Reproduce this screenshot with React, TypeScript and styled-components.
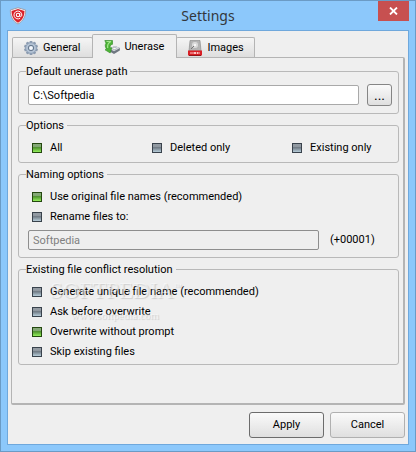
import React, { useState } from "react";
import styled, { createGlobalStyle, css } from "styled-components";

const GlobalStyle = createGlobalStyle`
  *, *::before, *::after { box-sizing: border-box; }
  body { margin: 0; background: #8cc8fb; }
  body, button, input {
    font-family: Roboto, "Noto Sans", sans-serif;
    font-size: 11px;
    line-height: 14px;
    color: #000;
  }
`;

const Window = styled.main`
  min-height: 100vh;
  display: flex;
  flex-direction: column;
  padding: 0 6px 6px;
  background: #8cc8fb;
  border: 1px solid #6b9bc5;
`;

const TitleBar = styled.header`
  display: grid;
  grid-template-columns: 32px 1fr 32px;
  align-items: start;
  height: 29px;
`;

const AppIcon = styled.svg`
  margin: 6px 0 0 2px;
`;

const Title = styled.h1`
  margin: 0;
  padding-top: 4px;
  font-family: "Noto Sans", "Open Sans", sans-serif;
  font-size: 14px;
  line-height: 22px;
  font-weight: 400;
  text-align: center;
  color: #33373b;
`;

const CloseButton = styled.button`
  display: grid;
  place-items: center;
  justify-self: end;
  width: 31px;
  height: 20px;
  padding: 0;
  border: 0;
  background: #c75050;
`;

const Client = styled.div`
  flex: 1;
  display: flex;
  flex-direction: column;
  padding: 3px 3px 6px;
  border: 1px solid #6fa8dc;
  background: #efefef;
`;

const TabList = styled.div`
  display: flex;
  align-items: flex-end;
  padding-left: 1px;
`;

const Tab = styled.button<{ $active?: boolean }>`
  display: flex;
  align-items: center;
  gap: 4px;
  height: 20px;
  padding: 0 10px;
  border: 1px solid #b4b4b4;
  border-bottom: 0;
  border-radius: 2px 2px 0 0;
  background: linear-gradient(#f5f5f5, #dedede);
  &:first-child {
    padding-right: 12px;
  }
  ${(p) =>
    p.$active &&
    css`
      height: 24px;
      margin: 0 -1px -1px;
      padding: 0 12px 0 11px;
      background: #efefef;
      z-index: 1;
    `}
`;

const Panel = styled.section`
  flex: 1;
  display: flex;
  flex-direction: column;
  gap: 5px;
  padding: 7px 4px 8px 6px;
  border: 1px solid #b4b4b4;
  border-right-width: 2px;
  border-bottom-width: 2px;
  border-radius: 2px;
`;

const Group = styled.fieldset<{ $tight?: boolean }>`
  position: relative;
  min-width: 0;
  margin: 0;
  padding: 6px 6px ${(p) => (p.$tight ? "2px" : "4px")} 9px;
  border: 1px solid #b9b9b9;
  border-radius: 3px;
`;

const Legend = styled.legend`
  margin-left: -2px;
  padding: 0 3px 0 0;
  line-height: 13px;
`;

const FieldRow = styled.div<{ $gap: number; $spaced?: boolean }>`
  display: flex;
  align-items: center;
  gap: ${(p) => p.$gap}px;
  padding: ${(p) => (p.$spaced ? "3px" : "0")} 0 3px;
`;

const TextField = styled.input`
  flex: 1;
  min-width: 0;
  height: 20px;
  padding: 0 4px;
  border: 1px solid #a9a9a9;
  border-radius: 2px;
  background: #fff;
  &:disabled {
    color: #808080;
    border-color: #8e8e8e;
    background: #efefef;
  }
`;

const Suffix = styled.span`
  width: 62px;
`;

const PushButton = styled.button<{ $default?: boolean }>`
  width: 75px;
  height: 26px;
  padding: 0;
  border: 1px solid ${(p) => (p.$default ? "#6c6c6c" : "#b0b0b0")};
  border-radius: 3px;
  background: linear-gradient(#fafafa, #dfdfdf);
`;

const BrowseButton = styled(PushButton)`
  width: 25px;
  height: 22px;
  border-color: #858585;
  font-size: 14px;
`;

const Columns = styled.div`
  display: grid;
  grid-template-columns: 120px 140px 1fr;
`;

const Option = styled.label`
  display: flex;
  align-items: center;
  gap: 8px;
  height: 20px;
  padding-left: 4px;
`;

const Mark = styled.input`
  appearance: none;
  width: 10px;
  height: 10px;
  margin: 0;
  border: 1px solid #39424c;
  background: linear-gradient(#929aa2 0 30%, #707a84 45%, #b6ccd8);
  &:checked {
    border-color: #24480f;
    background: linear-gradient(#85a877 0 30%, #4f922e 45%, #93ef5b);
  }
`;

const Watermark = styled.div`
  position: absolute;
  left: 31px;
  top: 1px;
  pointer-events: none;
  font-family: "Liberation Serif", serif;
  font-size: 23px;
  line-height: 28px;
  color: rgba(255, 255, 255, 0.5);
  text-shadow: 1px 1px 1px rgba(0, 0, 0, 0.14);
  white-space: nowrap;
`;

const Trademark = styled.sup`
  font-size: 8px;
  line-height: 0;
`;

const WatermarkUrl = styled.div`
  padding-left: 21px;
  font-size: 11px;
  line-height: 20px;
`;

const Footer = styled.footer`
  display: flex;
  justify-content: flex-end;
  gap: 6px;
  padding-top: 7px;
`;

function OptionItem({ name, label, checked, onPick }: {
  name: string; label: string; checked: boolean; onPick: (label: string) => void;
}) {
  return (
    <Option>
      <Mark type="radio" name={name} checked={checked} onChange={() => onPick(label)} />
      {label}
    </Option>
  );
}

function Options({ name, items, initial }: { name: string; items: string[]; initial: string }) {
  const [picked, setPicked] = useState(initial);
  return (
    <>
      {items.map((item) => (
        <OptionItem key={item} name={name} label={item} checked={item === picked} onPick={setPicked} />
      ))}
    </>
  );
}

function ShieldIcon() {
  return (
    <AppIcon width="18" height="18" viewBox="0 0 18 18" aria-hidden="true">
      <path d="M9 .8 16.6 3c.3 6-2.200 10.800-7.600 14C3.600 13.800 1.100 9 1.400 3Z" fill="#fff" stroke="#9a8f93" strokeWidth=".8" />
      <path d="M9 2 15.500 4c0 5-2 9-6.500 11.700C4.500 13 2.500 9 2.500 4Z" fill="#d92129" />
      <circle cx="9" cy="8" r="1.700" fill="none" stroke="#fff" strokeWidth="1.100" />
      <path d="M10.800 6.200v2.700c0 1.300 2 1 2-.9a3.900 3.900 0 1 0-1.700 3.200" fill="none" stroke="#fff" strokeWidth="1" />
    </AppIcon>
  );
}

function GearIcon() {
  const angles = [0, 36, 72, 108, 144, 180, 216, 252, 288, 324];
  return (
    <svg width="16" height="16" viewBox="0 0 16 16" aria-hidden="true">
      <g fill="#8c9bb0">
        {angles.map((a) => (
          <rect key={a} x="6.600" y="1" width="2.800" height="3" rx=".5" transform={`rotate(${a} 8 8)`} />
        ))}
      </g>
      <circle cx="8" cy="8" r="5.400" fill="#b4c3d5" stroke="#8799b0" strokeWidth=".8" />
      <circle cx="8" cy="8" r="2.700" fill="#cfdae6" stroke="#66788e" />
      <circle cx="8" cy="8" r="1.500" fill="#f6f8fb" />
    </svg>
  );
}

function UneraseIcon() {
  return (
    <svg width="16" height="16" viewBox="0 0 16 16" aria-hidden="true">
      <path d="m5 9.500 6-2.500 5 2-.2 2.500L10 15l-5-3Z" fill="#6f7780" />
      <path d="m5 9.500 6-2.500 5 2-6 3.300Z" fill="#d4d9df" />
      <ellipse cx="10.500" cy="9.500" rx="2.200" ry="1" fill="#f8f8f8" stroke="#8a929b" strokeWidth=".5" />
      <path d="M.8 1.500H8.500v3.800C6.800 5.500 5.800 7 6.200 9l1.600-.2-1.600 5.200L1 10.800l1.500-.6C1 7.500.8 6 2 4.200Z" fill="#4cb436" stroke="#2d8722" strokeWidth=".6" />
      <path d="M2.500 2.500H7C4 3.800 3.200 5.800 3.700 9" fill="none" stroke="#a4e58d" strokeWidth="1.200" />
    </svg>
  );
}

function ImageIcon() {
  return (
    <svg width="16" height="16" viewBox="0 0 16 16" aria-hidden="true">
      <path d="M3 .5h10l1 10.500H2Z" fill="#b5b5b5" stroke="#858585" strokeWidth=".6" />
      <circle cx="8" cy="5" r="3.700" fill="#d9d9d9" stroke="#999" strokeWidth=".5" />
      <circle cx="8" cy="5" r="1.200" fill="#f8f8f8" />
      <path d="m4 9 3-3" stroke="#777" />
      <rect x="1" y="10.500" width="14" height="5" fill="#d91e24" />
      <path d="M4 12v2M6 12v2M7 12.500h2v1H7M10.500 12v2M12 12v2" fill="none" stroke="#ffd6d6" strokeWidth=".9" />
      <path d="M2 15.500h12" stroke="#8f1519" />
    </svg>
  );
}

export default function App() {
  const [path, setPath] = useState("C:\\Softpedia");
  return (
    <>
      <GlobalStyle />
      <Window>
        <TitleBar>
          <ShieldIcon />
          <Title>Settings</Title>
          <CloseButton type="button" aria-label="Close">
            <svg width="9" height="8" viewBox="0 0 9 8" aria-hidden="true">
              <path d="m1 .5 7 7m0-7-7 7" stroke="#fff" strokeWidth="1.800" />
            </svg>
          </CloseButton>
        </TitleBar>
        <Client>
          <TabList role="tablist">
            <Tab type="button" role="tab" aria-selected="false"><GearIcon />General</Tab>
            <Tab type="button" role="tab" aria-selected="true" $active><UneraseIcon />Unerase</Tab>
            <Tab type="button" role="tab" aria-selected="false"><ImageIcon />Images</Tab>
          </TabList>
          <Panel role="tabpanel" aria-label="Unerase">
            <Group>
              <Legend>Default unerase path</Legend>
              <FieldRow $gap={8}>
                <TextField aria-label="Default unerase path" value={path} onChange={(e) => setPath(e.target.value)} />
                <BrowseButton type="button" aria-label="Browse">...</BrowseButton>
              </FieldRow>
            </Group>
            <Group>
              <Legend>Options</Legend>
              <Columns>
                <Options name="show" items={["All", "Deleted only", "Existing only"]} initial="All" />
              </Columns>
            </Group>
            <Group>
              <Legend>Naming options</Legend>
              <Options
                name="naming"
                items={["Use original file names (recommended)", "Rename files to:"]}
                initial="Use original file names (recommended)"
              />
              <FieldRow $gap={11} $spaced>
                <TextField aria-label="Rename files to" defaultValue="Softpedia" disabled />
                <Suffix>(+00001)</Suffix>
              </FieldRow>
            </Group>
            <Group $tight>
              <Legend>Existing file conflict resolution</Legend>
              <Options
                name="conflict"
                items={[
                  "Generate unique file name (recommended)",
                  "Ask before overwrite",
                  "Overwrite without prompt",
                  "Skip existing files",
                ]}
                initial="Overwrite without prompt"
              />
              <Watermark aria-hidden="true">
                SOFTPEDIA<Trademark>™</Trademark>
                <WatermarkUrl>www.softpedia.com</WatermarkUrl>
              </Watermark>
            </Group>
          </Panel>
          <Footer>
            <PushButton type="submit" $default>Apply</PushButton>
            <PushButton type="button">Cancel</PushButton>
          </Footer>
        </Client>
      </Window>
    </>
  );
}
